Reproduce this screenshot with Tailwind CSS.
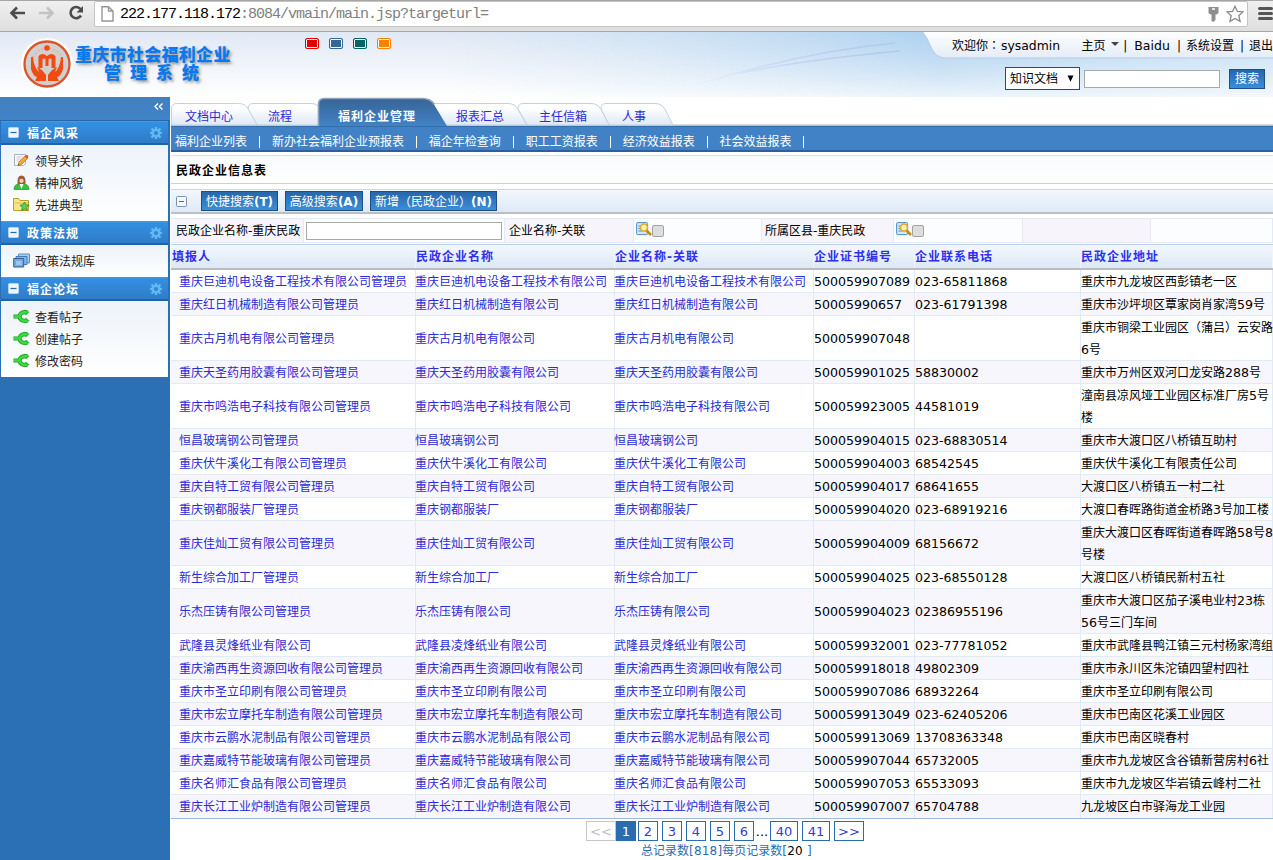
<!DOCTYPE html>
<html lang="zh-CN">
<head>
<meta charset="utf-8">
<title>重庆市社会福利企业管理系统</title>
<script src="https://cdn.jsdelivr.net/npm/@tailwindcss/browser@4"></script>
</head>
<body class="h-[860px] w-[1273px] overflow-hidden bg-white font-['DejaVu_Sans','Noto_Sans_CJK_SC',sans-serif] text-[12px] leading-[22px] text-black">
<svg class="hidden">
  <symbol id="gear" viewBox="0 0 12 12"><g stroke="#62b8f3" fill="none"><circle cx="6" cy="6" r="3.2" stroke-width="2.200"/><path d="M6 0v2.500M6 9.500v2.500M0 6h2.500M9.500 6h2.500M1.500 1.500l2 2M8.500 8.500l2 2M10.500 1.500l-2 2M3.500 8.500l-2 2" stroke-width="2.400"/></g></symbol>
  <symbol id="minus" viewBox="0 0 11 11"><rect x=".5" y=".5" width="10" height="10" rx="1" fill="#eef5fc" stroke="#b5d2ee"/><path d="M2.500 5.500h6" stroke="#2468ad" stroke-width="1.200"/></symbol>
  <symbol id="pencil" viewBox="0 0 16 15"><path d="M1 1.500h11v9l-2 2H1z" fill="#f7f9fb" stroke="#a9b4bf"/><path d="M3 4h6M3 6h5M3 8h3" stroke="#c6ced6"/><path d="M4.500 12.500l1-3.500 6-6 2.500 2.500-6 6z" fill="#f6a93a" stroke="#c47618" stroke-width=".8"/><path d="M11 3.500l1.200-1.300q1-.9 2 0t.4 2L13.400 5.500z" fill="#e5533c"/><path d="M4.500 12.500l.4-1.500 1.100 1.100z" fill="#333"/></symbol>
  <symbol id="person" viewBox="0 0 16 15"><path d="M.5 14.500q0-5 4.500-5.500h6q4.500.5 4.500 5.500z" fill="#35c43c" stroke="#1e9227" stroke-width=".7"/><path d="M6 9h4l-2 5z" fill="#fff"/><path d="M4 8.500Q3.500 .5 8 .5t4 8q-1 1-2 .5H6q-1 .5-2-.5z" fill="#9b5a38"/><path d="M6 4.500q2-1.500 4 0v2q-2 3-4 0z" fill="#f7cfae"/></symbol>
  <symbol id="folder" viewBox="0 0 17 15"><path d="M.5 13.500v-12h5l1.500 2h8.500v10z" fill="#f6e58a" stroke="#b99f24"/><path d="M2 6h13" stroke="#d5bd48"/><path d="M11.500 5l1.500 2.800 3 .4-2.200 2.200.6 3.100-2.900-1.400-2.900 1.400.6-3.100L7 8.200l3-.4z" fill="#5fd04b" stroke="#288e2c" stroke-width=".8"/></symbol>
  <symbol id="stack" viewBox="0 0 17 15"><path d="M5.500 1h11v9h-11z" fill="#a9cdf0" stroke="#5c8fc6"/><path d="M3 3.500h11v8H3z" fill="#88b7e5" stroke="#457ab6"/><path d="M.7 5.500h10v8.500H.7z" fill="#76a9dc" stroke="#345f96"/><path d="M3 8h5.500v4H3z" fill="#9cc6ee"/></symbol>
  <symbol id="branch" viewBox="0 0 17 14"><path d="M.5 7h6M14.500 2.800Q7 2 6.500 7q.5 5 8 4.200" fill="none" stroke="#1c9e27" stroke-width="4.200"/><path d="M11.500 0l5 2.500-4 3.300zM12.500 8.200l4 3-5 2.800z" fill="#1fae2a"/><path d="M1 7h6M14.500 2.800Q7 2 6.500 7q.5 5 8 4.200" fill="none" stroke="#3bdd3b" stroke-width="2.500"/></symbol>
  <symbol id="find" viewBox="0 0 16 14"><rect x=".6" y=".6" width="11" height="12" rx="1" fill="#d3e7f8" stroke="#4f8dc7"/><path d="M2.500 4h3M2.500 6.500h3M2.500 9h4" stroke="#4f8dc7"/><path d="M10 8l5 5" stroke="#c58b12" stroke-width="2.600"/><circle cx="8" cy="5.500" r="3.500" fill="#fff3b5" stroke="#e2a927" stroke-width="1.600"/></symbol>
</svg>

<!-- browser toolbar -->
<div class="flex h-8 items-start border-t border-b border-[#a6a6a6] bg-gradient-to-b from-[#f0f0f0] to-[#dedede]">
  <svg class="mt-[3px] ml-[8px] h-[18px] w-[80px] shrink-0" viewBox="0 0 80 18" fill="none">
    <path d="M17 9H3M9 3.500L3.500 9 9 14.500" stroke="#4c4c4c" stroke-width="2.600"/>
    <path d="M31 9h14M39 3.500L44.500 9 39 14.500" stroke="#c2c2c2" stroke-width="2.600"/>
    <path d="M72.500 5A5.600 5.600 0 1 0 73 11.500" stroke="#4c4c4c" stroke-width="2.600"/><path d="M75 2v6.500h-6.500z" fill="#4c4c4c"/>
  </svg>
  <div class="ml-[6px] flex h-[26px] w-[1154px] shrink-0 items-center rounded-[2px] border border-[#c4c4c4] bg-white pr-[3px] pl-[6px]">
    <svg class="h-4 w-[13px]" viewBox="0 0 13 16"><path d="M1 .8h6.500L12 5v10H1zM7.500.8V5H12" fill="#fff" stroke="#969696" stroke-width="1.400"/></svg>
    <span class="mt-px ml-[6px] font-['Liberation_Mono',monospace] text-[15px] tracking-[-1px] whitespace-pre text-black">222.177.118.172<span class="text-[#808080]">:8084/vmain/main.jsp?targeturl=</span></span>
    <svg class="ml-auto h-[17px] w-[11px]" viewBox="0 0 11 17"><path d="M.5 1h10v6l-2 1.500H7.500V14l-2 2-2-1V8.500h-1L.5 7z" fill="#8f8f8f"/><path d="M4 3h3" stroke="#fff" stroke-width="1.500"/></svg>
    <svg class="ml-[7px] h-[18px] w-[18px]" viewBox="0 0 18 18"><path d="M9 1.200l2.400 5.200 5.600.5-4.200 3.800 1.300 5.700L9 13.500l-5.100 2.900 1.300-5.700L1 6.900l5.600-.5z" fill="#fff" stroke="#8a8a8a" stroke-width="1.300"/></svg>
  </div>
  <svg class="mt-[5px] ml-[10px] h-[15px] w-[15px] shrink-0" viewBox="0 0 15 15"><path d="M1.500 2.500h12M1.500 7.500h12M1.500 12.500h12" stroke="#555" stroke-width="3" stroke-linecap="round"/></svg>
</div>

<!-- page header -->
<header class="relative flex h-[65px] bg-gradient-to-b from-[#e1e9f5] to-white">
  <svg class="absolute inset-0 h-[65px] w-[1273px]" viewBox="0 0 1273 65">
    <defs>
      <linearGradient id="sky" x1="0" x2="1" y1="0" y2="0"><stop offset="0" stop-color="#c5dff4" stop-opacity="0"/><stop offset=".6" stop-color="#acd1f0"/><stop offset="1" stop-color="#c9e4f7"/></linearGradient>
      <linearGradient id="fade" x1="0" x2="0" y1="0" y2="1"><stop offset="0" stop-color="#fff"/><stop offset="1" stop-color="#fff" stop-opacity=".22"/></linearGradient>
      <mask id="skymask"><rect width="1273" height="65" fill="url(#fade)"/></mask>
      <linearGradient id="wave" gradientUnits="userSpaceOnUse" x1="690" x2="900" y1="0" y2="0"><stop offset="0" stop-color="#b4c6ee" stop-opacity="0"/><stop offset="1" stop-color="#b4c6ee"/></linearGradient>
      <linearGradient id="panel" x1="0" x2="0" y1="0" y2="1"><stop offset="0" stop-color="#fff"/><stop offset="1" stop-color="#e4ecf7"/></linearGradient>
    </defs>
    <rect x="440" width="833" height="65" fill="url(#sky)" mask="url(#skymask)"/>
    <path d="M690 55Q800 20 895 11M740 41Q810 27 900 19" fill="none" stroke="url(#wave)" stroke-width="1.500"/>
    <path d="M922 -1q5 6 9 16t13 11h340V-1z" fill="url(#panel)" stroke="#b7cbe6"/>
  </svg>
  <svg class="relative mt-[5px] ml-[20px] h-[54px] w-[54px] shrink-0" viewBox="0 0 54 54">
    <circle cx="27" cy="27" r="26" fill="#fff"/><circle cx="27" cy="27" r="22.500" fill="#d2d0ce" stroke="#dc542c" stroke-width="2.300"/>
    <path d="M13 20q5-8 14-9 10 1 15 9" fill="none" stroke="#ef9070" stroke-width="1.200" stroke-dasharray="1 3"/>
    <circle cx="27" cy="11" r="2.800" fill="#f24b12"/>
    <path d="M18.500 31V19q4-4 8.500 0 4.500-4 8.500 0v12h-4v-9q-2-1-3 0v7h-3v-7q-1-1-3 0v9z" fill="#f24b12"/>
    <path d="M11 20v12q2 7 6 8l-2 4h11v-6q-4-6-9-8l2 5q-5-4-6-15zM43 20v12q-2 7-6 8l2 4H28v-6q4-6 9-8l-2 5q5-4 6-15z" fill="#f24b12"/>
  </svg>
  <div class="relative mt-[14px] ml-[1px] w-[170px] text-[17px] leading-[18px] font-black whitespace-nowrap text-[#0879ee] [text-shadow:2px_2px_3px_#999]">
    <div class="tracking-[.3px]">重庆市社会福利企业</div>
    <div class="pl-[29px] tracking-[9px]">管理系统</div>
  </div>
  <div class="relative mt-[6px] ml-[60px] flex gap-[10px]">
    <i class="h-[11px] w-[14px] rounded-[2px] border border-[#e00000] bg-[#e00000] inset-ring inset-ring-white"></i>
    <i class="h-[11px] w-[14px] rounded-[2px] border border-[#336699] bg-[#336699] inset-ring inset-ring-white"></i>
    <i class="h-[11px] w-[14px] rounded-[2px] border border-[#006666] bg-[#006666] inset-ring inset-ring-white"></i>
    <i class="h-[11px] w-[14px] rounded-[2px] border border-[#ff8000] bg-[#ff8000] inset-ring inset-ring-white"></i>
  </div>
  <div class="absolute top-0 left-[952px] w-[321px] overflow-hidden">
    <div class="flex h-[27px] items-center whitespace-nowrap">
      <span class="w-[131px]">欢迎你<span lang="zh-TW" class="font-['Noto_Sans_CJK_TC']">：</span><span class="ml-px text-[12.4px]">sysadmin</span></span>
      <span class="w-[30px]">主页</span><i class="-mt-[3px] border-x-[4px] border-t-[4px] border-x-transparent border-t-[#444]"></i>
      <span class="ml-[4px]">|</span><span class="ml-[7px] text-[12.5px]">Baidu</span><span class="ml-[7px]">|</span><span class="ml-[5px]">系统设置</span><span class="ml-[6px]">|</span><span class="ml-[5px]">退出</span>
    </div>
    <div class="flex items-center pt-[8px] pl-[53px]">
      <div class="flex h-[23px] w-[75px] items-center border border-[#1d4f86] bg-white pl-[4px]">知识文档<svg class="ml-[9px] h-[7px] w-[7px]" viewBox="0 0 7 7"><path d="M.5.500h6L3.500 6.800z"/></svg></div>
      <div class="ml-[4px] h-[18px] w-[136px] border border-[#a9a9a9] bg-white"></div>
      <div class="ml-[9px] flex h-5 w-9 items-center justify-center border border-[#1d4f86] bg-gradient-to-b from-[#2766a9] to-[#3b8edb] text-white">搜索</div>
    </div>
  </div>
</header>

<div class="flex h-[763px]">
  <aside class="w-[170px] shrink-0 bg-[#2b70b5]">
    <div class="flex h-[24px] justify-end border-b border-[#2a65a4] bg-gradient-to-b from-[#437fc0] to-[#4083c8] pt-[6px] pr-[7px]">
      <svg class="h-[7px] w-[9px]" viewBox="0 0 9 7"><path d="M4 .5L1 3.500l3 3M8.500.500l-3 3 3 3" fill="none" stroke="#fff" stroke-width="1.400"/></svg>
    </div>
    <div id="menu" class="ml-px w-[167px]"></div>
  </aside>

  <main class="ml-px w-[1102px] overflow-hidden">
    <!-- tabs -->
    <div class="relative h-[29px]">
      <svg class="absolute inset-0 h-[29px] w-[1102px]" viewBox="0 0 1102 29">
        <defs>
          <linearGradient id="tab" x1="0" x2="0" y1="0" y2="1"><stop offset=".2" stop-color="#fff"/><stop offset="1" stop-color="#dfe8f4"/></linearGradient>
          <linearGradient id="act" x1="0" x2="0" y1="0" y2="1"><stop offset="0" stop-color="#376496"/><stop offset="1" stop-color="#4182c6"/></linearGradient>
        </defs>
        <path d="M0 28.500h1102" stroke="#b8bec5" stroke-width="2"/>
        <g fill="url(#tab)" stroke="#bfd2e6">
          <path d="M438 28l-8-16q0-5.500 5-5.500h49q7 0 10 6l8 15.500z"/>
          <path d="M356 28l-9-16q0-5.500 5-5.500h68q7 0 10 6l8 15.500z"/>
          <path d="M260 28V6.500h77q7 0 10 6l9 15.500z"/>
          <path d="M86 28l-9-16q0-5.500 5-5.500h58q8 0 8 6V28z"/>
          <path d="M.5 28V12q0-5.500 5-5.500h62q7 0 10 6L86 28z"/>
        </g>
        <path d="M147 29V7q0-5.500 6-5.500h98q8 0 12 6l13 21.500z" fill="url(#act)"/>
        <path d="M147.500 29V7q0-5.500 6-5.500h98q8 0 12 6" fill="none" stroke="#8ba2bb" stroke-width="1.600"/>
      </svg>
      <div class="relative flex pt-[9px] text-[#2a2ae0]">
        <span class="w-[83px] pl-[14px]">文档中心</span><span class="w-[84px] pl-[14px]">流程</span><span class="w-[118px] font-bold tracking-[1px] text-white">福利企业管理</span><span class="w-[83px]">报表汇总</span><span class="w-[83px]">主任信箱</span><span>人事</span>
      </div>
    </div>
    <nav id="nav" class="flex h-[26px] items-center border-t border-b-2 border-t-[#356da9] border-b-[#2c5f9c] bg-[#4182c6] pt-[7px] pl-[4px] text-white"></nav>
    <h1 class="mt-[3px] h-[29px] border-y border-t-[#d5e0ee] border-b-[#c3d2e5] bg-gradient-to-b from-[#fafbfe] to-white pt-[4px] pl-[5px] font-bold tracking-[1px]">民政企业信息表</h1>
    <div class="mt-[5px] flex h-[25px] items-center border-t border-b-2 border-t-[#c9d9ec] border-b-[#bbbfc4] bg-gradient-to-b from-[#f2f6fe] to-[#dfeaf6] pl-[5px] *:pt-px">
      <svg class="h-[12px] w-[11px]" viewBox="0 0 11 11"><rect x=".5" y=".5" width="10" height="10" rx="1" fill="#f4f8fd" stroke="#7d93ad"/><path d="M3 5.500h5" stroke="#4f6f95"/></svg>
      <div class="ml-[14px] flex h-[20px] w-[77px] items-center justify-center border border-[#1d4f86] bg-gradient-to-b from-[#2766a9] to-[#3b8edb] text-white">快捷搜索<b>(T)</b></div>
      <div class="ml-[7px] flex h-[20px] w-[78px] items-center justify-center border border-[#1d4f86] bg-gradient-to-b from-[#2766a9] to-[#3b8edb] text-white">高级搜索<b>(A)</b></div>
      <div class="ml-[7px] flex h-[20px] w-[127px] items-center justify-center border border-[#1d4f86] bg-gradient-to-b from-[#2766a9] to-[#3b8edb] text-white">新增<span lang="zh-TW" class="font-['Noto_Sans_CJK_TC']">（</span>民政企业<span lang="zh-TW" class="font-['Noto_Sans_CJK_TC']">）</span><b>(N)</b></div>
    </div>
    <div class="mt-[4px] flex h-[25px] border-y border-[#e0ebf6] bg-[#fcfdfe] whitespace-nowrap *:flex *:items-center *:border-r *:border-[#e0ebf6]">
      <div class="w-[133px] bg-[#f7f5fb] pl-[5px]">民政企业名称-重庆民政</div>
      <div class="w-[201px] pl-[2px]"><i class="h-[18px] w-[196px] border border-[#a9a9a9] bg-white"></i></div>
      <div class="w-[129px] bg-[#f7f5fb] pl-[4px]">企业名称-关联</div>
      <div class="w-[128px] pl-[2px]"><svg class="-mt-[3px] h-[14px] w-[16px]"><use href="#find"/></svg><i class="h-[12px] w-[12px] rounded-[2px] border border-[#a3a3a3] bg-[#dedede]"></i></div>
      <div class="w-[132px] bg-[#f7f5fb] pl-[3px]">所属区县-重庆民政</div>
      <div class="w-[129px] pl-[2px]"><svg class="-mt-[3px] h-[14px] w-[16px]"><use href="#find"/></svg><i class="h-[12px] w-[12px] rounded-[2px] border border-[#a3a3a3] bg-[#dedede]"></i></div>
      <div class="w-[128px] bg-[#f7f5fb]"></div>
      <div class="w-[122px]"></div>
    </div>
    <div id="head" class="mt-[1px] grid h-[26px] grid-cols-[245px_199px_199px_101px_166px_192px] border-t border-b-2 border-t-[#b9d0ef] border-b-[#b9bcc0] bg-gradient-to-b from-[#f4f8fe] to-[#dce8f5] font-bold tracking-[1px] text-[#2f2ff0] *:border-r *:border-[#eef5fb] *:pt-px">
      <div class="pl-px">填报人</div><div>民政企业名称</div><div>企业名称-关联</div><div>企业证书编号</div><div>企业联系电话</div><div>民政企业地址</div>
    </div>
    <div id="rows" class="border-b border-[#9fb9de]"></div>
    <!-- pagination -->
    <div class="mt-[2px] ml-[415px] flex h-5 text-[13px] leading-[19px] text-[#3a3ad0]">
      <span class="w-[30px] border border-[#c4c8cc] text-center text-[#bbc0c8]">&lt;&lt;</span>
      <span class="w-[20px] border border-[#2b6cb0] bg-[#2b6cb0] text-center text-white">1</span>
      <span class="ml-[2px] w-[20px] border border-[#2b6cb0] text-center">2</span>
      <span class="ml-[4px] w-[20px] border border-[#2b6cb0] text-center">3</span>
      <span class="ml-[4px] w-[20px] border border-[#2b6cb0] text-center">4</span>
      <span class="ml-[4px] w-[20px] border border-[#2b6cb0] text-center">5</span>
      <span class="ml-[4px] w-[20px] border border-[#2b6cb0] text-center">6</span>
      <span class="w-[16px] pt-px text-center text-black">...</span>
      <span class="w-[28px] border border-[#2b6cb0] text-center">40</span>
      <span class="ml-[4px] w-[28px] border border-[#2b6cb0] text-center">41</span>
      <span class="ml-[4px] w-[30px] border border-[#2b6cb0] text-center">&gt;&gt;</span>
    </div>
    <div class="ml-[470px] pt-px leading-[18px] whitespace-pre text-[#2b6cb0]">总记录数<span class="tracking-[.2px]">[818]</span>每页记录数<span class="tracking-[.2px]">[<span class="text-black">20</span> ]</span></div>
  </main>
</div>

<script>
const menu = [
  ['福企风采', [['pencil', '领导关怀'], ['person', '精神风貌'], ['folder', '先进典型']]],
  ['政策法规', [['stack', '政策法规库']]],
  ['福企论坛', [['branch', '查看帖子'], ['branch', '创建帖子'], ['branch', '修改密码']]]
];
document.getElementById('menu').innerHTML = menu.map(([t, items]) =>
  `<div class="flex h-6 items-center border-t border-b-2 border-t-[#3c9cf0] border-b-[#2162a5] bg-gradient-to-b from-[#3490e2] to-[#2f7cc8] pr-[6px] pl-[7px] font-bold tracking-[1px] text-white"><svg class="h-[11px] w-[11px]"><use href="#minus"/></svg><span class="mt-[2px] ml-[8px]">${t}</span><svg class="mt-px ml-auto h-3 w-3"><use href="#gear"/></svg></div>
  <div class="bg-gradient-to-b from-[#edf3fa] to-white pt-[6px] pb-[4px]">${items.map(([i, s]) => `<div class="flex h-[22px] items-center pl-[12px] text-[#222]"><svg class="-mt-[4px] h-[15px] w-[17px]"><use href="#${i}"/></svg><span class="ml-[5px]">${s}</span></div>`).join('')}</div>`).join('');

document.getElementById('nav').innerHTML = ['福利企业列表', '新办社会福利企业预报表', '福企年检查询', '职工工资报表', '经济效益报表', '社会效益报表']
  .map(s => `<span>${s}</span><i class="flex w-[24.900px] justify-center"><b class="h-[12px] w-px bg-white"></b></i>`).join('');

const m = '管理员';
const rows = [
  ['重庆巨迪机电设备工程技术有限公司', m, '500059907089', '023-65811868', '重庆市九龙坡区西彭镇老一区'],
  ['重庆红日机械制造有限公司', m, '50005990657', '023-61791398', '重庆市沙坪坝区覃家岗肖家湾59号'],
  ['重庆古月机电有限公司', m, '500059907048', '', '重庆市铜梁工业园区（蒲吕）云安路|6号'],
  ['重庆天圣药用胶囊有限公司', m, '500059901025', '58830002', '重庆市万州区双河口龙安路288号'],
  ['重庆市鸣浩电子科技有限公司', m, '500059923005', '44581019', '潼南县凉风垭工业园区标准厂房5号|楼'],
  ['恒昌玻璃钢公司', m, '500059904015', '023-68830514', '重庆市大渡口区八桥镇互助村'],
  ['重庆伏牛溪化工有限公司', m, '500059904003', '68542545', '重庆伏牛溪化工有限责任公司'],
  ['重庆自特工贸有限公司', m, '500059904017', '68641655', '大渡口区八桥镇五一村二社'],
  ['重庆钢都服装厂', m, '500059904020', '023-68919216', '大渡口春晖路街道金桥路3号加工楼'],
  ['重庆佳灿工贸有限公司', m, '500059904009', '68156672', '重庆大渡口区春晖街道春晖路58号8|号楼'],
  ['新生综合加工厂', m, '500059904025', '023-68550128', '大渡口区八桥镇民新村五社'],
  ['乐杰压铸有限公司', m, '500059904023', '02386955196', '重庆市大渡口区茄子溪电业村23栋|56号三门车间'],
  ['武隆县灵烽纸业有限公司', '', '500059932001', '023-77781052', '重庆市武隆县鸭江镇三元村杨家湾组', '武隆县凌烽纸业有限公司'],
  ['重庆渝西再生资源回收有限公司', m, '500059918018', '49802309', '重庆市永川区朱沱镇四望村四社'],
  ['重庆市圣立印刷有限公司', m, '500059907086', '68932264', '重庆市圣立印刷有限公司'],
  ['重庆市宏立摩托车制造有限公司', m, '500059913049', '023-62405206', '重庆市巴南区花溪工业园区'],
  ['重庆市云鹏水泥制品有限公司', m, '500059913069', '13708363348', '重庆市巴南区晓春村'],
  ['重庆嘉威特节能玻璃有限公司', m, '500059907044', '65732005', '重庆市九龙坡区含谷镇新营房村6社'],
  ['重庆名师汇食品有限公司', m, '500059907053', '65533093', '重庆市九龙坡区华岩镇云峰村二社'],
  ['重庆长江工业炉制造有限公司', m, '500059907007', '65704788', '九龙坡区白市驿海龙工业园']
];
const num = s => s.replace(/[\d-]+/g, d => `~${d}^`).replace(/[（）]/g, c => `<span lang="zh-TW" class="font-['Noto_Sans_CJK_TC'] leading-none">${c}</span>`)
  .replace(/~/g, '<span class="text-[12.58px] leading-none">').replace(/\^/g, '</span>').replace('|', '<br>');
document.getElementById('rows').innerHTML = rows.map(([n, suf, id, tel, addr, alt], i) => {
  const h = addr.includes('|') ? 'h-[45px]' : 'h-[23px]';
  return `<div class="grid grid-cols-[245px_199px_199px_101px_166px_192px] whitespace-nowrap ${h} ${i % 2 ? 'bg-[#f7f6fd]' : 'bg-white'} ${i < 19 ? 'border-b border-[#e0ebf6]' : ''} *:flex *:items-center *:border-r *:border-[#e0ebf6] *:pt-px">
  <div class="pl-[9px] -indent-px text-[#2a2ad8]">${n}${suf}</div><div class="-indent-px text-[#2a2ad8]">${alt || n}</div><div class="-indent-px text-[#2a2ad8]">${n}</div><div>${num(id)}</div><div>${num(tel)}</div><div><p>${num(addr)}</p></div></div>`;
}).join('');
</script>
</body>
</html>
